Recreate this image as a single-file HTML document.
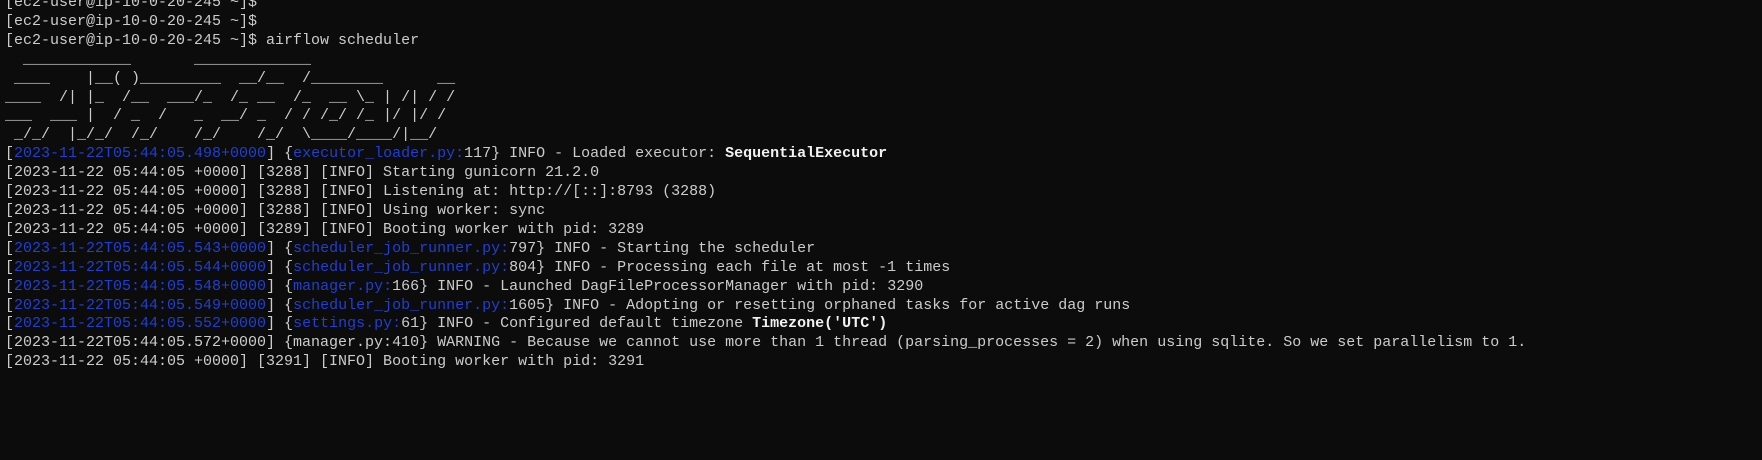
<!DOCTYPE html>
<html><head><meta charset="utf-8"><style>
html,body{margin:0;padding:0;background:#0c0c0c;width:1762px;height:460px;overflow:hidden}
pre{position:absolute;left:5px;top:-6px;margin:0;font-family:"Liberation Mono",monospace;font-size:15px;line-height:18.9px;color:#cccccc;white-space:pre}
.b{color:#1f3fd6}
.w{color:#f2f2f2;font-weight:bold}
</style></head><body><pre>[ec2-user@ip-10-0-20-245 ~]$
[ec2-user@ip-10-0-20-245 ~]$
[ec2-user@ip-10-0-20-245 ~]$ airflow scheduler
  ____________       _____________
 ____    |__( )_________  __/__  /________      __
____  /| |_  /__  ___/_  /_ __  /_  __ \_ | /| / /
___  ___ |  / _  /   _  __/ _  / / /_/ /_ |/ |/ /
 _/_/  |_/_/  /_/    /_/    /_/  \____/____/|__/
[<span class="b">2023-11-22T05:44:05.498+0000</span>] {<span class="b">executor_loader.py:</span>117} INFO - Loaded executor: <span class="w">SequentialExecutor</span>
[2023-11-22 05:44:05 +0000] [3288] [INFO] Starting gunicorn 21.2.0
[2023-11-22 05:44:05 +0000] [3288] [INFO] Listening at: http://[::]:8793 (3288)
[2023-11-22 05:44:05 +0000] [3288] [INFO] Using worker: sync
[2023-11-22 05:44:05 +0000] [3289] [INFO] Booting worker with pid: 3289
[<span class="b">2023-11-22T05:44:05.543+0000</span>] {<span class="b">scheduler_job_runner.py:</span>797} INFO - Starting the scheduler
[<span class="b">2023-11-22T05:44:05.544+0000</span>] {<span class="b">scheduler_job_runner.py:</span>804} INFO - Processing each file at most -1 times
[<span class="b">2023-11-22T05:44:05.548+0000</span>] {<span class="b">manager.py:</span>166} INFO - Launched DagFileProcessorManager with pid: 3290
[<span class="b">2023-11-22T05:44:05.549+0000</span>] {<span class="b">scheduler_job_runner.py:</span>1605} INFO - Adopting or resetting orphaned tasks for active dag runs
[<span class="b">2023-11-22T05:44:05.552+0000</span>] {<span class="b">settings.py:</span>61} INFO - Configured default timezone <span class="w">Timezone('UTC')</span>
[2023-11-22T05:44:05.572+0000] {manager.py:410} WARNING - Because we cannot use more than 1 thread (parsing_processes = 2) when using sqlite. So we set parallelism to 1.
[2023-11-22 05:44:05 +0000] [3291] [INFO] Booting worker with pid: 3291
</pre></body></html>
